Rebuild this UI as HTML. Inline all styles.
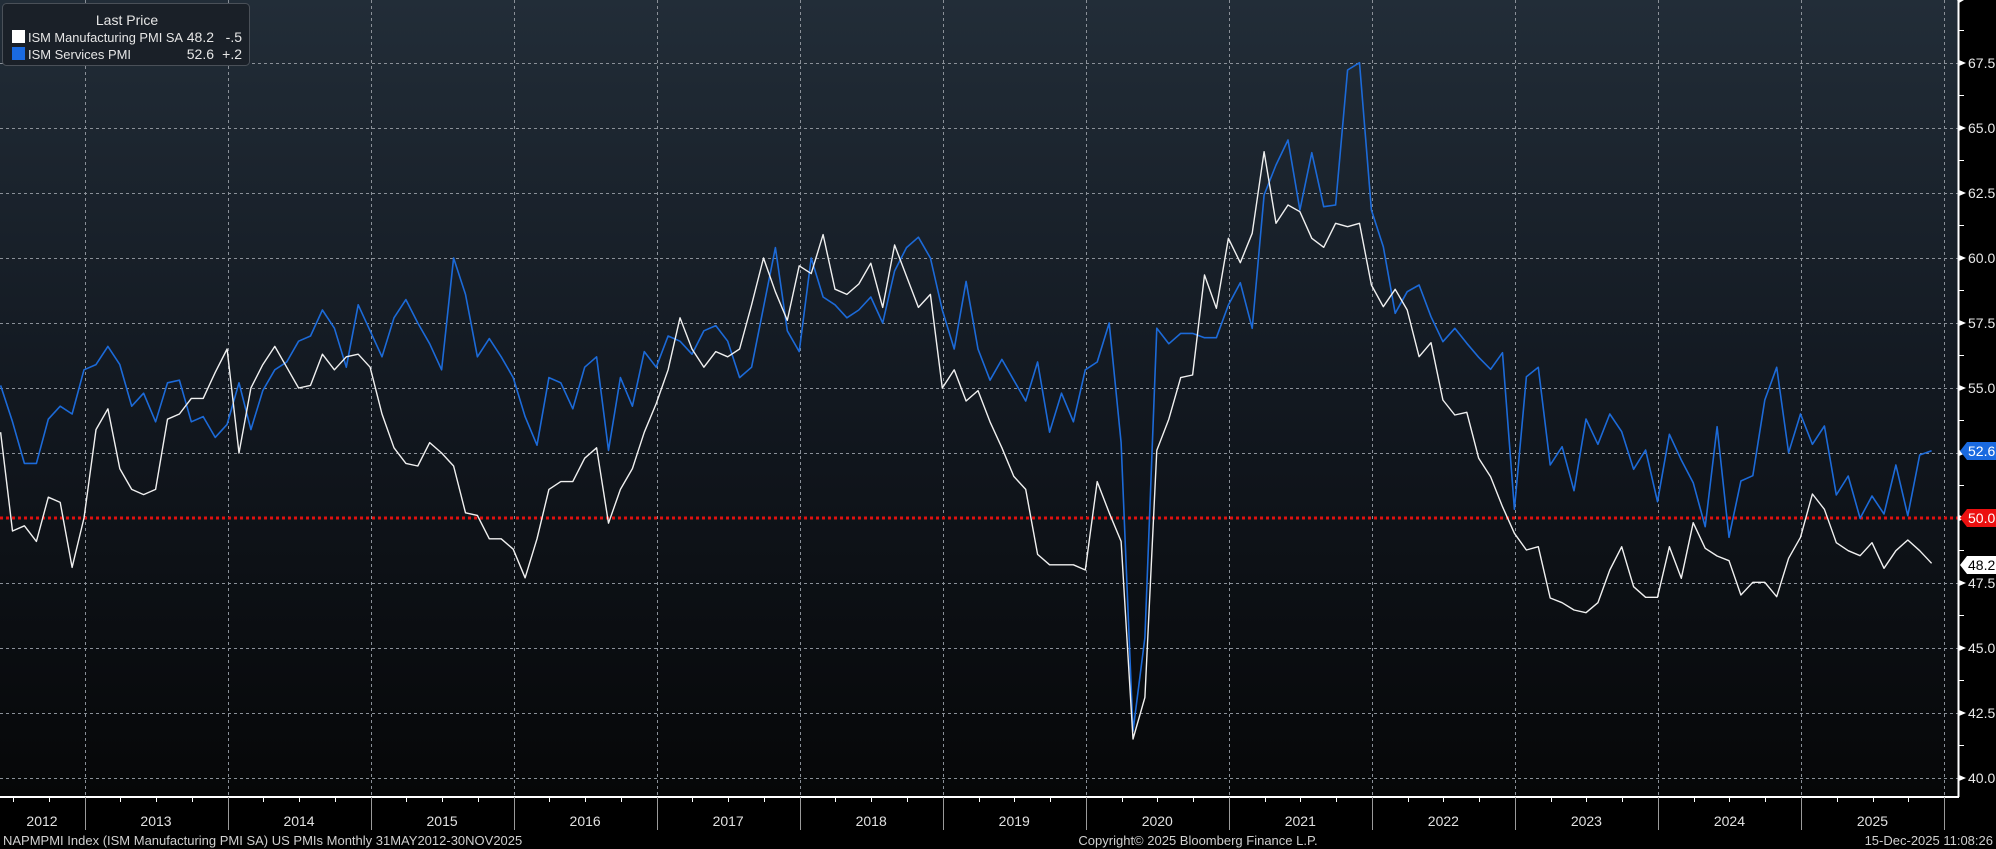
<!DOCTYPE html>
<html><head><meta charset="utf-8">
<style>
html,body{margin:0;padding:0;background:#000;}
body{width:1996px;height:849px;overflow:hidden;font-family:"Liberation Sans",sans-serif;}
svg{display:block}
</style></head>
<body>
<svg id="c" width="1996" height="849" xmlns="http://www.w3.org/2000/svg" font-family="Liberation Sans, sans-serif">
<defs>
<linearGradient id="bg" x1="0" y1="0" x2="0" y2="1">
<stop offset="0" stop-color="#222d38"/>
<stop offset="0.5" stop-color="#121820"/>
<stop offset="1" stop-color="#060708"/>
</linearGradient>
</defs>
<rect x="0" y="0" width="1996" height="849" fill="#000"/>
<rect x="0" y="0" width="1958" height="797" fill="url(#bg)"/>
<g id="grid"></g>
<g id="lines"></g>
<g id="axis"></g>
<!-- legend -->
<rect x="2.5" y="3.5" width="247" height="62" rx="4" fill="#1a2028" stroke="#4a5058"/>
<text x="127" y="25" fill="#e6e6e6" font-size="14" text-anchor="middle">Last Price</text>
<rect x="12" y="30" width="13" height="13" fill="#ffffff"/>
<text x="28" y="42" fill="#e6e6e6" font-size="13" textLength="155" lengthAdjust="spacingAndGlyphs">ISM Manufacturing PMI SA</text>
<text x="214" y="42" fill="#e6e6e6" font-size="14" text-anchor="end">48.2</text>
<text x="242" y="42" fill="#e6e6e6" font-size="14" text-anchor="end">-.5</text>
<rect x="12" y="47" width="13" height="13" fill="#1a6ae0"/>
<text x="28" y="59" fill="#e6e6e6" font-size="13" textLength="103" lengthAdjust="spacingAndGlyphs">ISM Services PMI</text>
<text x="214" y="59" fill="#e6e6e6" font-size="14" text-anchor="end">52.6</text>
<text x="242" y="59" fill="#e6e6e6" font-size="14" text-anchor="end">+.2</text>
<!-- footer -->
<text x="3" y="845" fill="#d0d0d0" font-size="13">NAPMPMI Index (ISM Manufacturing PMI SA) US PMIs Monthly 31MAY2012-30NOV2025</text>
<text x="1198" y="845" fill="#d0d0d0" font-size="13" text-anchor="middle">Copyright© 2025 Bloomberg Finance L.P.</text>
<text x="1993" y="845" fill="#d0d0d0" font-size="13" text-anchor="end">15-Dec-2025 11:08:26</text>
</svg>
<script>
var NS="http://www.w3.org/2000/svg";
function el(p,t,a,txt){var e=document.createElementNS(NS,t);for(var k in a)e.setAttribute(k,a[k]);if(txt!=null)e.textContent=txt;document.getElementById(p).appendChild(e);return e;}
function yv(v){return 518-(v-50)*26;}
for(var v=40;v<=67.5;v+=2.5){if(Math.abs(v-50)<0.01)continue;var y=Math.round(yv(v))+0.5;el("grid","line",{x1:0,y1:y,x2:1958,y2:y,stroke:"#8a9098","stroke-width":1,"stroke-dasharray":"3,3"});}
for(var k=0;k<=13;k++){var x=Math.round(84.5+143.04*k)+0.5;if(x>1958)break;el("grid","line",{x1:x,y1:0,x2:x,y2:797,stroke:"#8a9098","stroke-width":1,"stroke-dasharray":"3,3"});}
el("grid","line",{x1:0,y1:518,x2:1958,y2:518,stroke:"#e01010","stroke-width":3,"stroke-dasharray":"3,3"});
var mv=[53.3,49.5,49.7,49.1,50.8,50.6,48.1,50.0,53.4,54.2,51.9,51.1,50.9,51.1,53.8,54.0,54.6,54.6,55.6,56.5,52.5,55.0,55.9,56.6,55.8,55.0,55.1,56.3,55.7,56.2,56.3,55.8,54.0,52.7,
52.1,52.0,52.9,52.5,52.0,50.2,50.1,49.2,49.2,48.8,47.7,49.2,51.1,51.4,51.4,52.3,52.7,49.8,51.1,51.9,53.3,54.4,55.7,57.7,56.5,55.8,56.4,56.2,56.5,58.2,60.0,58.7,57.6,59.7,
59.4,60.9,58.8,58.6,59.0,59.8,58.1,60.5,59.3,58.1,58.6,55.0,55.7,54.5,54.9,53.7,52.7,51.6,51.1,48.6,48.2,48.2,48.2,48.0,51.4,50.2,49.1,41.5,43.1,52.6,53.8,55.4,55.5];
var sv=[55.1,53.7,52.1,52.1,53.8,54.3,54.0,55.7,55.9,56.6,55.9,54.3,54.8,53.7,55.2,55.3,53.7,53.9,53.1,53.6,55.2,53.4,54.9,55.7,56.0,56.8,57.0,58.0,57.3,55.8,58.2,57.2,56.2,57.7,
58.4,57.5,56.7,55.7,60.0,58.6,56.2,56.9,56.2,55.4,53.9,52.8,55.4,55.2,54.2,55.8,56.2,52.6,55.4,54.3,56.4,55.8,57.0,56.8,56.3,57.2,57.4,56.8,55.4,55.8,58.1,60.4,57.2,56.4,
60.0,58.5,58.2,57.7,58.0,58.5,57.5,59.5,60.4,60.8,60.0,58.0,56.5,59.1,56.5,55.3,56.1,55.3,54.5,56.0,53.3,54.8,53.7,55.7,56.0,57.5,52.9,41.8,45.4,57.3,56.7,57.1,57.1];
var my=mv.map(yv), sy=sv.map(yv);
var m9=[705,805,595,668,580,335,550,495,515,595,622,550,560,550,735,800,748,810,950,908,1080,1125,1117,1255,1310,1400,1480,1530,1520];
var s9=[893,893,795,728,865,465,375,300,510,338,500,495,90,68,510,620,820,755,735,830,905,865,910,952,988,938,1408,1010,982];
m9.forEach(function(z){my.push(40+z/3);}); s9.forEach(function(z){sy.push(40+z/3);});
my.push(598); sy.push(465);
var m10=[818,840,848,818,720,650,770,802,802,650,745,578,655,678,692,795,757,757,800,685,622,492,538,638,662,677,638,715,662,630,662,700];
var s10=[350,482,267,343,252,305,418,360,515,313,390,458,590,290,622,453,437,210,112,368,252,343,288,495,438,565,498,552,405,557,375,362];
m10.forEach(function(z){my.push(330+z/3);}); s10.forEach(function(z){sy.push(330+z/3);});
function pts(a){return a.map(function(y,i){return (0.6+11.92*i).toFixed(1)+","+y.toFixed(1);}).join(" ");}
el("lines","polyline",{points:pts(sy),fill:"none",stroke:"#1c6ad8","stroke-width":1.6,"stroke-linejoin":"round"});
el("lines","polyline",{points:pts(my),fill:"none",stroke:"#f0f0f0","stroke-width":1.4,"stroke-linejoin":"round"});
el("axis","line",{x1:1958.5,y1:0,x2:1958.5,y2:797,stroke:"#fff","stroke-width":2});
el("axis","line",{x1:0,y1:797,x2:1959,y2:797,stroke:"#fff","stroke-width":2});
for(var v=38.75;v<=70;v+=1.25){var y=yv(v);if(y<0||y>797)continue;var maj=Math.abs((v/2.5)-Math.round(v/2.5))<0.01;
 if(maj){el("axis","polygon",{points:"1959,"+(y-3)+" 1966,"+y+" 1959,"+(y+3),fill:"#fff"});
  if(Math.abs(v-50)>0.01&&Math.abs(v-52.5)>0.01)el("axis","text",{x:1968,y:y+5,fill:"#e8e8e8","font-size":14},v.toFixed(1));}
 else el("axis","line",{x1:1959,y1:y,x2:1964,y2:y,stroke:"#fff","stroke-width":1});}
el("axis","polygon",{points:"1957,0 1964,0 1959,3",fill:"#fff"});
function tag(y,bg,fg,t){el("axis","polygon",{points:"1960,"+y+" 1967,"+(y-9)+" 1996,"+(y-9)+" 1996,"+(y+9)+" 1967,"+(y+9),fill:bg});
 el("axis","text",{x:1968,y:y+5,fill:fg,"font-size":14},t);}
tag(451,"#1a6ae0","#fff","52.6");
tag(518,"#ec1010","#fff","50.0");
tag(565,"#ffffff","#000","48.2");
for(var q=0;q<60;q++){var x=Math.round(84.5+35.76*(q-4))+0.5;if(x<0||x>1958)continue;
 if(q%4==0)el("axis","line",{x1:x,y1:797,x2:x,y2:830,stroke:"#9a9a9a","stroke-width":1});
 else el("axis","line",{x1:x,y1:797,x2:x,y2:802,stroke:"#fff","stroke-width":1});}
for(var k=-1;k<=12;k++){var cx=84.5+143.04*k+71.5;if(k==-1)cx=42;el("axis","text",{x:cx,y:826,fill:"#e0e0e0","font-size":14,"text-anchor":"middle"},String(2013+k));}
</script>
</body></html>
